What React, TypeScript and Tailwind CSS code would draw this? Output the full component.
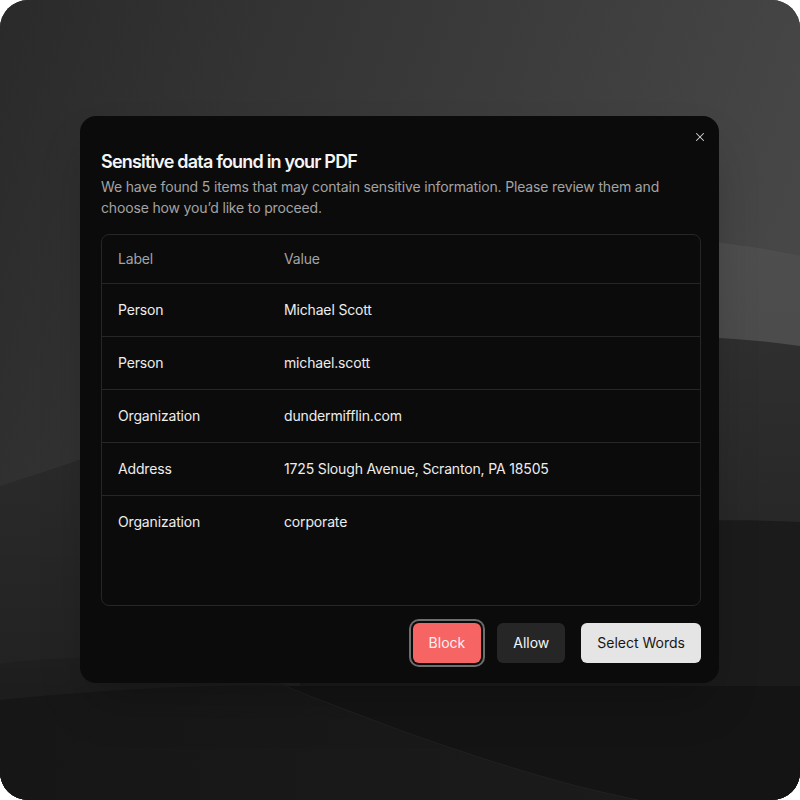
import React, { useState } from 'react';
import { X } from 'lucide-react';

interface Finding {
  label: string;
  value: string;
}

const findings: Finding[] = [
  { label: 'Person', value: 'Michael Scott' },
  { label: 'Person', value: 'michael.scott' },
  { label: 'Organization', value: 'dundermifflin.com' },
  { label: 'Address', value: '1725 Slough Avenue, Scranton, PA 18505' },
  { label: 'Organization', value: 'corporate' },
];

// Dark sand-dune wallpaper behind the dialog
const DuneBackdrop: React.FC = () => (
  <svg className="absolute inset-0 h-full w-full" viewBox="0 0 800 800" preserveAspectRatio="none">
    <defs>
      <linearGradient id="sky" x1="0" y1="0" x2="1" y2="0.35">
        <stop offset="0" stopColor="#2a2a2a" />
        <stop offset="1" stopColor="#484848" />
      </linearGradient>
      <linearGradient id="crest" x1="0" y1="0" x2="0" y2="1">
        <stop offset="0" stopColor="#4e4e4e" />
        <stop offset="1" stopColor="#444444" />
      </linearGradient>
      <linearGradient id="slope" x1="0" y1="0" x2="0" y2="1">
        <stop offset="0" stopColor="#2f2f2f" />
        <stop offset="1" stopColor="#1d1d1d" />
      </linearGradient>
      <linearGradient id="low" x1="0" y1="0" x2="0" y2="1">
        <stop offset="0" stopColor="#1f1f1f" />
        <stop offset="1" stopColor="#171717" />
      </linearGradient>
      <linearGradient id="floor" x1="0" y1="0" x2="1" y2="0">
        <stop offset="0" stopColor="#161616" />
        <stop offset="1" stopColor="#1b1b1b" />
      </linearGradient>
    </defs>
    <rect width="800" height="800" fill="url(#sky)" />
    <path d="M560 225 C 650 236, 740 242, 800 256 L 800 800 L 560 800 Z" fill="url(#crest)" />
    <path d="M0 486 C 180 430, 480 300, 800 346 L 800 800 L 0 800 Z" fill="url(#slope)" />
    <path d="M300 560 C 480 530, 660 515, 800 522 L 800 800 L 300 800 Z" fill="#1b1b1b" />
    <path d="M0 664 C 90 650, 200 660, 290 686 L 290 800 L 0 800 Z" fill="url(#low)" />
    <path d="M286 686 C 420 740, 540 780, 640 800 L 0 800 L 0 700 C 100 690, 200 684, 286 686 Z" fill="url(#floor)" />
    <path d="M286 686 C 420 740, 540 780, 640 800" fill="none" stroke="#2a2a2a" strokeWidth="1.5" opacity="0.6" />
    <path d="M640 800 C 540 780, 420 740, 286 686 L 800 686 L 800 800 Z" fill="#141414" />
  </svg>
);

const App: React.FC = () => {
  const [choice, setChoice] = useState<'block' | 'allow' | 'select'>('block');

  return (
    <div className="h-[800px] w-[800px] bg-white" style={{ fontFamily: 'Inter, "Noto Sans", sans-serif' }}>
      <div className="relative h-full w-full overflow-hidden rounded-[28px] bg-[#262626]">
        <DuneBackdrop />

        <div className="relative pl-[80px] pt-[116px]">
          <div className="relative w-[639px] rounded-2xl bg-[#0b0b0b] pb-5 pl-[21px] pr-[18px] pt-8 tracking-[-0.01em] shadow-2xl">
            <button className="absolute right-[12px] top-[14px] text-[#d4d4d4]" aria-label="Close">
              <X size={14} strokeWidth={1.75} />
            </button>

            <h2 className="text-[18px] font-semibold leading-7 tracking-[-0.045em] text-[#f5f5f5]">
              Sensitive data found in your PDF
            </h2>
            <p className="text-sm leading-[21px] text-[#a3a3a3]">
              We have found 5 items that may contain sensitive information. Please review them and choose how you’d
              like to proceed.
            </p>

            {/* Findings table */}
            <div className="mt-4 h-[372px] overflow-hidden rounded-lg border border-[#262626]">
              <table className="w-full text-left text-sm">
                <thead>
                  <tr className="h-12 border-b border-[#262626]">
                    <th className="w-[182px] pl-4 font-normal text-[#a3a3a3]">Label</th>
                    <th className="font-normal text-[#a3a3a3]">Value</th>
                  </tr>
                </thead>
                <tbody>
                  {findings.map((f, i) => (
                    <tr
                      key={i}
                      className={`h-[53px] ${i < findings.length - 1 ? 'border-b border-[#262626]' : ''}`}
                    >
                      <td className="pl-4 text-[#ededed]">{f.label}</td>
                      <td className="text-[#ededed]">{f.value}</td>
                    </tr>
                  ))}
                </tbody>
              </table>
            </div>

            {/* Actions */}
            <div className="mt-[17px] flex items-center justify-end gap-4 tracking-normal">
              <button
                onClick={() => setChoice('block')}
                className={`h-10 rounded-md bg-[#f76464] px-4 text-sm text-[#fff1f1] ${
                  choice === 'block' ? 'ring-2 ring-[#6e6e6e] ring-offset-2 ring-offset-[#0b0b0b]' : ''
                }`}
              >
                Block
              </button>
              <button
                onClick={() => setChoice('allow')}
                className="h-10 rounded-md bg-[#262626] px-4 text-sm text-[#f5f5f5]"
              >
                Allow
              </button>
              <button
                onClick={() => setChoice('select')}
                className="h-10 rounded-md bg-[#e5e5e5] px-4 text-sm text-[#171717]"
              >
                Select Words
              </button>
            </div>
          </div>
        </div>
      </div>
    </div>
  );
};

export default App;
